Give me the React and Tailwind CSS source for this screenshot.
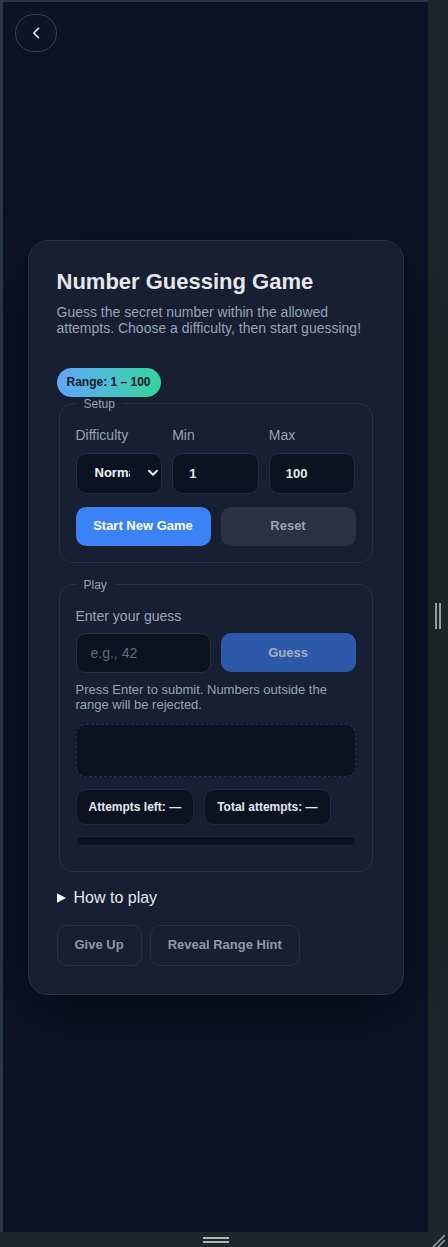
import { useState } from 'react';

const ChevronDown = () => (
    <svg width="10" height="7" viewBox="0 0 10 7" fill="none">
        <path d="M1 1.2L5 5.2L9 1.2" stroke="#e5e7eb" strokeWidth="2" strokeLinecap="round" strokeLinejoin="round" />
    </svg>
);

const App = () => {
    const [difficulty, setDifficulty] = useState('normal');
    const [min, setMin] = useState('1');
    const [max, setMax] = useState('100');
    const [guess, setGuess] = useState('');

    return (
        <div className="w-[448px] h-[1247px] bg-[#1f2629] flex flex-col font-['Liberation_Sans',Arial,sans-serif] overflow-hidden">
            <div className="flex h-[1232px]">
                {/* page */}
                <div className="relative w-[428px] h-full border-l-[3px] border-t-2 border-[#2a3845] bg-[#0d1326] flex items-center justify-center">
                    <button className="absolute left-3 top-3 w-[42px] h-[38px] rounded-full border border-[#394255] bg-[#0e1426] flex items-center justify-center">
                        <svg width="10" height="12" viewBox="0 0 10 12" fill="none">
                            <path d="M7.5 1.3L2.8 6L7.5 10.7" stroke="#f1f5f9" strokeWidth="1.6" strokeLinecap="round" strokeLinejoin="round" />
                        </svg>
                    </button>

                    <div className="w-[376px] rounded-[20px] border border-[#283044] bg-[#181f32] p-7 flex flex-col shadow-[0_20px_60px_rgba(0,0,0,0.45)]">
                        <h1 className="text-[22px] leading-[26px] font-bold text-[#e5e7eb]">Number Guessing Game</h1>
                        <p className="mt-[9px] text-[14px] leading-4 text-[#94a3b8]">
                            Guess the secret number within the allowed attempts. Choose a difficulty, then start guessing!
                        </p>

                        <div className="mt-8 self-start h-[29px] px-[10px] rounded-full bg-linear-to-r from-[#60a5fa] to-[#34d399] flex items-center text-[12px] font-bold text-[#0f172a]">
                            Range: 1 – 100
                        </div>

                        {/* Setup */}
                        <fieldset className="mx-[2px] border border-[#283044] rounded-[14px] px-4 pt-4 pb-4">
                            <legend className="px-2 text-[12px] leading-[14px] text-[#94a3b8]">Setup</legend>
                            <div className="grid grid-cols-3 gap-x-[10px]">
                                <div>
                                    <label className="block text-[14px] leading-4 text-[#94a3b8] mb-[10px]">Difficulty</label>
                                    <div className="relative">
                                        <select
                                            value={difficulty}
                                            onChange={(e) => setDifficulty(e.target.value)}
                                            className="appearance-none w-full h-[41px] rounded-[10px] bg-[#0c1220] border border-[#263043] pl-[18px] pr-[31px] text-[13px] font-bold text-[#f1f5f9] outline-none"
                                        >
                                            <option value="easy">Easy</option>
                                            <option value="normal">Normal</option>
                                            <option value="hard">Hard</option>
                                        </select>
                                        <span className="absolute right-[4px] top-1/2 -translate-y-1/2 pointer-events-none flex">
                                            <ChevronDown />
                                        </span>
                                    </div>
                                </div>
                                <div>
                                    <label className="block text-[14px] leading-4 text-[#94a3b8] mb-[10px]">Min</label>
                                    <input
                                        value={min}
                                        onChange={(e) => setMin(e.target.value)}
                                        className="w-full h-[41px] rounded-[10px] bg-[#0c1220] border border-[#263043] px-4 text-[13px] font-bold text-[#e5e7eb] outline-none"
                                    />
                                </div>
                                <div>
                                    <label className="block text-[14px] leading-4 text-[#94a3b8] mb-[10px]">Max</label>
                                    <input
                                        value={max}
                                        onChange={(e) => setMax(e.target.value)}
                                        className="w-full h-[41px] rounded-[10px] bg-[#0c1220] border border-[#263043] px-4 text-[13px] font-bold text-[#e5e7eb] outline-none"
                                    />
                                </div>
                            </div>
                            <div className="grid grid-cols-2 gap-[10px] mt-[13px]">
                                <button className="h-[39px] rounded-[10px] bg-[#3b82f6] text-[13px] font-bold text-white">Start New Game</button>
                                <button className="h-[39px] rounded-[10px] bg-[#2a3243] text-[13px] font-bold text-[#99a2b0]">Reset</button>
                            </div>
                        </fieldset>

                        {/* Play */}
                        <fieldset className="mt-[15px] mx-[2px] border border-[#283044] rounded-[14px] px-4 pt-4 pb-[25px]">
                            <legend className="px-2 text-[12px] leading-[14px] text-[#94a3b8]">Play</legend>
                            <label className="block text-[14px] leading-4 text-[#9aa5b8]">Enter your guess</label>
                            <div className="mt-[9px] grid grid-cols-2 gap-[10px] items-center">
                                <input
                                    value={guess}
                                    onChange={(e) => setGuess(e.target.value)}
                                    placeholder="e.g., 42"
                                    className="w-full h-[40px] rounded-[10px] bg-[#0c1220] border border-[#263043] px-[14px] text-[14px] text-[#e5e7eb] placeholder:text-[#5f6b7e] outline-none"
                                />
                                <button className="h-[39px] rounded-[10px] bg-[#2d5aa8] text-[13px] font-bold text-[#a4acbc]">Guess</button>
                            </div>
                            <p className="mt-[9px] text-[13px] leading-[15px] text-[#94a3b8]">
                                Press Enter to submit. Numbers outside the range will be rejected.
                            </p>
                            <div className="mt-3 h-[53px] rounded-[10px] border border-dashed border-[#2b3446] bg-[#0c1220]" />
                            <div className="mt-3 flex gap-[10px]">
                                <div className="h-[36px] px-3 rounded-[10px] bg-[#0c1220] border border-[#222a3b] flex items-center text-[12px] font-bold text-[#e2e8f0]">
                                    Attempts left: —
                                </div>
                                <div className="h-[36px] px-3 rounded-[10px] bg-[#0c1220] border border-[#222a3b] flex items-center text-[12px] font-bold text-[#e2e8f0]">
                                    Total attempts: —
                                </div>
                            </div>
                            <div className="mt-[11px] h-[10px] rounded-full bg-[#0c1220] border border-[#1f2739]" />
                        </fieldset>

                        <details className="mt-[17px]">
                            <summary className="list-none [&::-webkit-details-marker]:hidden flex items-center gap-[8px] text-[16px] leading-[18px] text-[#e2e8f0] cursor-pointer">
                                <svg width="9" height="10" viewBox="0 0 9 10">
                                    <path d="M0 0.3L9 5L0 9.7Z" fill="#f1f5f9" />
                                </svg>
                                How to play
                            </summary>
                        </details>

                        <div className="mt-[18px] flex gap-2">
                            <button className="h-[41px] px-[17px] rounded-[10px] border border-[#283044] text-[13px] font-bold text-[#8f99a9]">Give Up</button>
                            <button className="h-[41px] px-[17px] rounded-[10px] border border-[#283044] text-[13px] font-bold text-[#8f99a9]">Reveal Range Hint</button>
                        </div>
                    </div>
                </div>

                {/* right splitter */}
                <div className="w-5 flex items-center justify-center">
                    <div className="flex gap-[2px]">
                        <div className="w-[2px] h-[26px] bg-[#a0a5a8]" />
                        <div className="w-[2px] h-[26px] bg-[#a0a5a8]" />
                    </div>
                </div>
            </div>

            {/* bottom splitter */}
            <div className="relative h-[15px] flex">
                <div className="w-[428px] pl-[3px] flex justify-center items-center">
                    <div className="flex flex-col gap-[2px] mt-[1px]">
                        <div className="w-[26px] h-[2px] bg-[#b0b4b6]" />
                        <div className="w-[26px] h-[2px] bg-[#b0b4b6]" />
                    </div>
                </div>
                <svg className="absolute right-[3px] bottom-0" width="13" height="12" viewBox="0 0 13 12">
                    <path d="M1 12L13 0M6 12L13 5" stroke="#9aa0a3" strokeWidth="1.5" />
                </svg>
            </div>
        </div>
    );
};

export default App;
